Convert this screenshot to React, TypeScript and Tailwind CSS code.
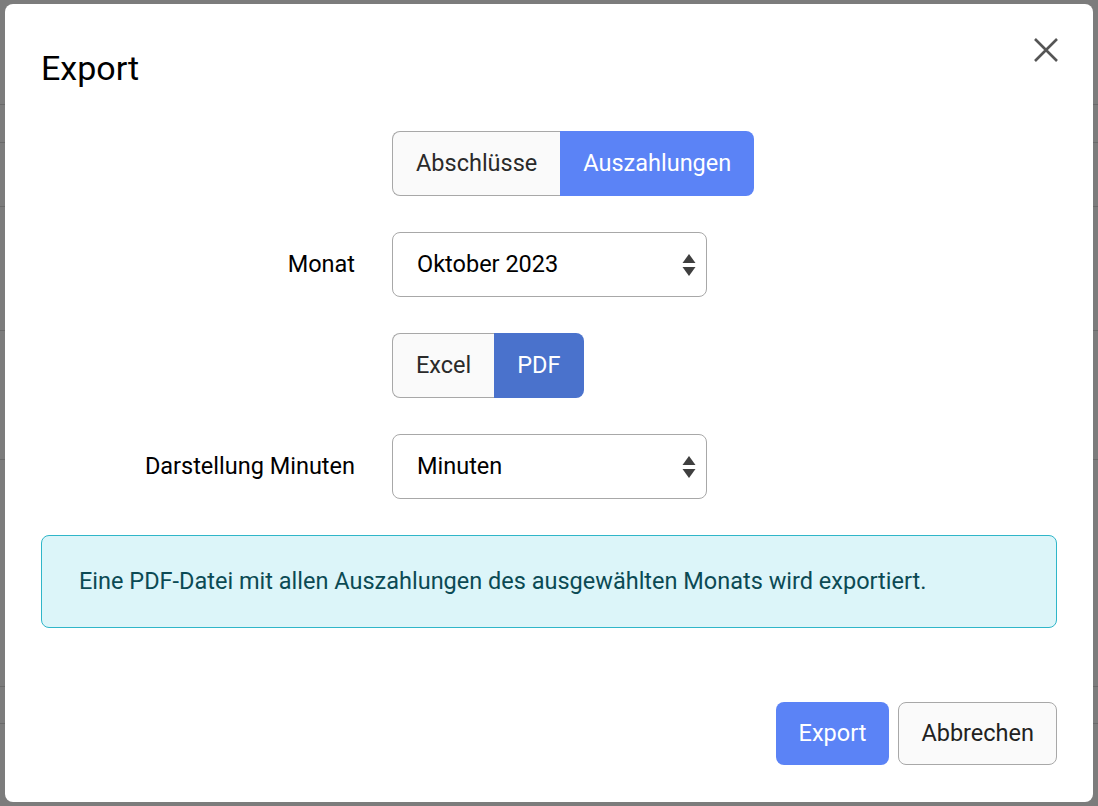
import React, { useState } from 'react';

const font = { fontFamily: 'Roboto, "Liberation Sans", Arial, sans-serif' };

function SelectArrows() {
  return (
    <svg width="14" height="24" viewBox="0 0 14 24" className="shrink-0">
      <path d="M7 1 L13.5 10 L0.5 10 Z" fill="#3f3f3f" />
      <path d="M0.5 14 L13.5 14 L7 23 Z" fill="#3f3f3f" />
    </svg>
  );
}

function FakeSelect({ value }: { value: string }) {
  return (
    <div className="flex h-[65px] w-[315px] items-center justify-between rounded-lg border border-[#a8a8a8] bg-white pl-6 pr-[10px] text-[23.5px] text-black">
      <span>{value}</span>
      <SelectArrows />
    </div>
  );
}

function Segmented({
  options,
  active,
  activeClass,
  onChange,
}: {
  options: string[];
  active: number;
  activeClass: string;
  onChange: (i: number) => void;
}) {
  return (
    <div className="flex h-[65px]">
      {options.map((opt, i) => {
        const isActive = i === active;
        const first = i === 0;
        const last = i === options.length - 1;
        return (
          <button
            key={opt}
            onClick={() => onChange(i)}
            className={[
              'flex items-center px-[23px] text-[23.5px]',
              first ? 'rounded-l-lg' : '',
              last ? 'rounded-r-lg' : '',
              isActive
                ? `${activeClass} text-white`
                : 'border border-[#a8a8a8] bg-[#fafafa] text-[#2a2a2a]',
              !isActive && !first ? 'border-l-0' : '',
              !isActive && !last ? 'border-r-0' : '',
            ].join(' ')}
          >
            {opt}
          </button>
        );
      })}
    </div>
  );
}

export default function App() {
  const [kind, setKind] = useState(1);
  const [format, setFormat] = useState(1);

  return (
    <div className="relative h-[806px] w-full overflow-hidden bg-[#7c7c7c]" style={font}>
      {/* dimmed page behind the dialog */}
      <div className="flex flex-col">
        <div className="h-[105px] border-b border-[#6a6a6a]" />
        <div className="h-[38px] border-b border-[#6a6a6a]" />
        <div className="h-[64px] border-b border-[#6a6a6a]" />
        <div className="h-[124px] border-b border-[#6a6a6a]" />
        <div className="h-[129px] border-b border-[#6a6a6a]" />
        <div className="h-[227px] border-b border-[#6a6a6a]" />
        <div className="h-[37px] border-b border-[#6a6a6a]" />
      </div>

      {/* dialog */}
      <div className="absolute inset-0 pt-[4px] pr-[5px] pb-[4px] pl-[5px]">
        <div className="flex h-full flex-col rounded-lg bg-white px-9">
          <div className="flex items-start justify-between pt-[44px]">
            <h2 className="text-[34px] leading-[40px] text-black">Export</h2>
            <button aria-label="Close" className="mt-[-15px] mr-[-6px] p-1">
              <svg width="26" height="26" viewBox="0 0 26 26">
                <path d="M2 2 L24 24 M24 2 L2 24" stroke="#555" strokeWidth="2.6" strokeLinecap="butt" />
              </svg>
            </button>
          </div>

          <div className="mt-[43px] grid grid-cols-[314px_1fr] items-center gap-x-[37px] gap-y-[36px]">
            <div />
            <Segmented
              options={['Abschlüsse', 'Auszahlungen']}
              active={kind}
              activeClass="bg-[#5b83f6]"
              onChange={setKind}
            />

            <div className="text-right text-[23.5px] text-black">Monat</div>
            <FakeSelect value="Oktober 2023" />

            <div />
            <Segmented
              options={['Excel', 'PDF']}
              active={format}
              activeClass="bg-[#4a72cc]"
              onChange={setFormat}
            />

            <div className="text-right text-[23.5px] text-black">Darstellung Minuten</div>
            <FakeSelect value="Minuten" />
          </div>

          <div className="mt-[36px] flex h-[93px] items-center rounded-lg border border-[#2fb6c9] bg-[#dcf5f9] pl-[37px] text-[23.5px] text-[#0b4a54]">
            Eine PDF-Datei mit allen Auszahlungen des ausgewählten Monats wird exportiert.
          </div>

          <div className="mt-[74px] flex justify-end gap-[9px]">
            <button className="flex h-[63px] items-center rounded-lg bg-[#5b83f6] px-[23px] text-[23.5px] text-white">
              Export
            </button>
            <button className="flex h-[63px] items-center rounded-lg border border-[#a8a8a8] bg-[#fafafa] px-[22px] text-[23.5px] text-[#222]">
              Abbrechen
            </button>
          </div>
        </div>
      </div>
    </div>
  );
}
